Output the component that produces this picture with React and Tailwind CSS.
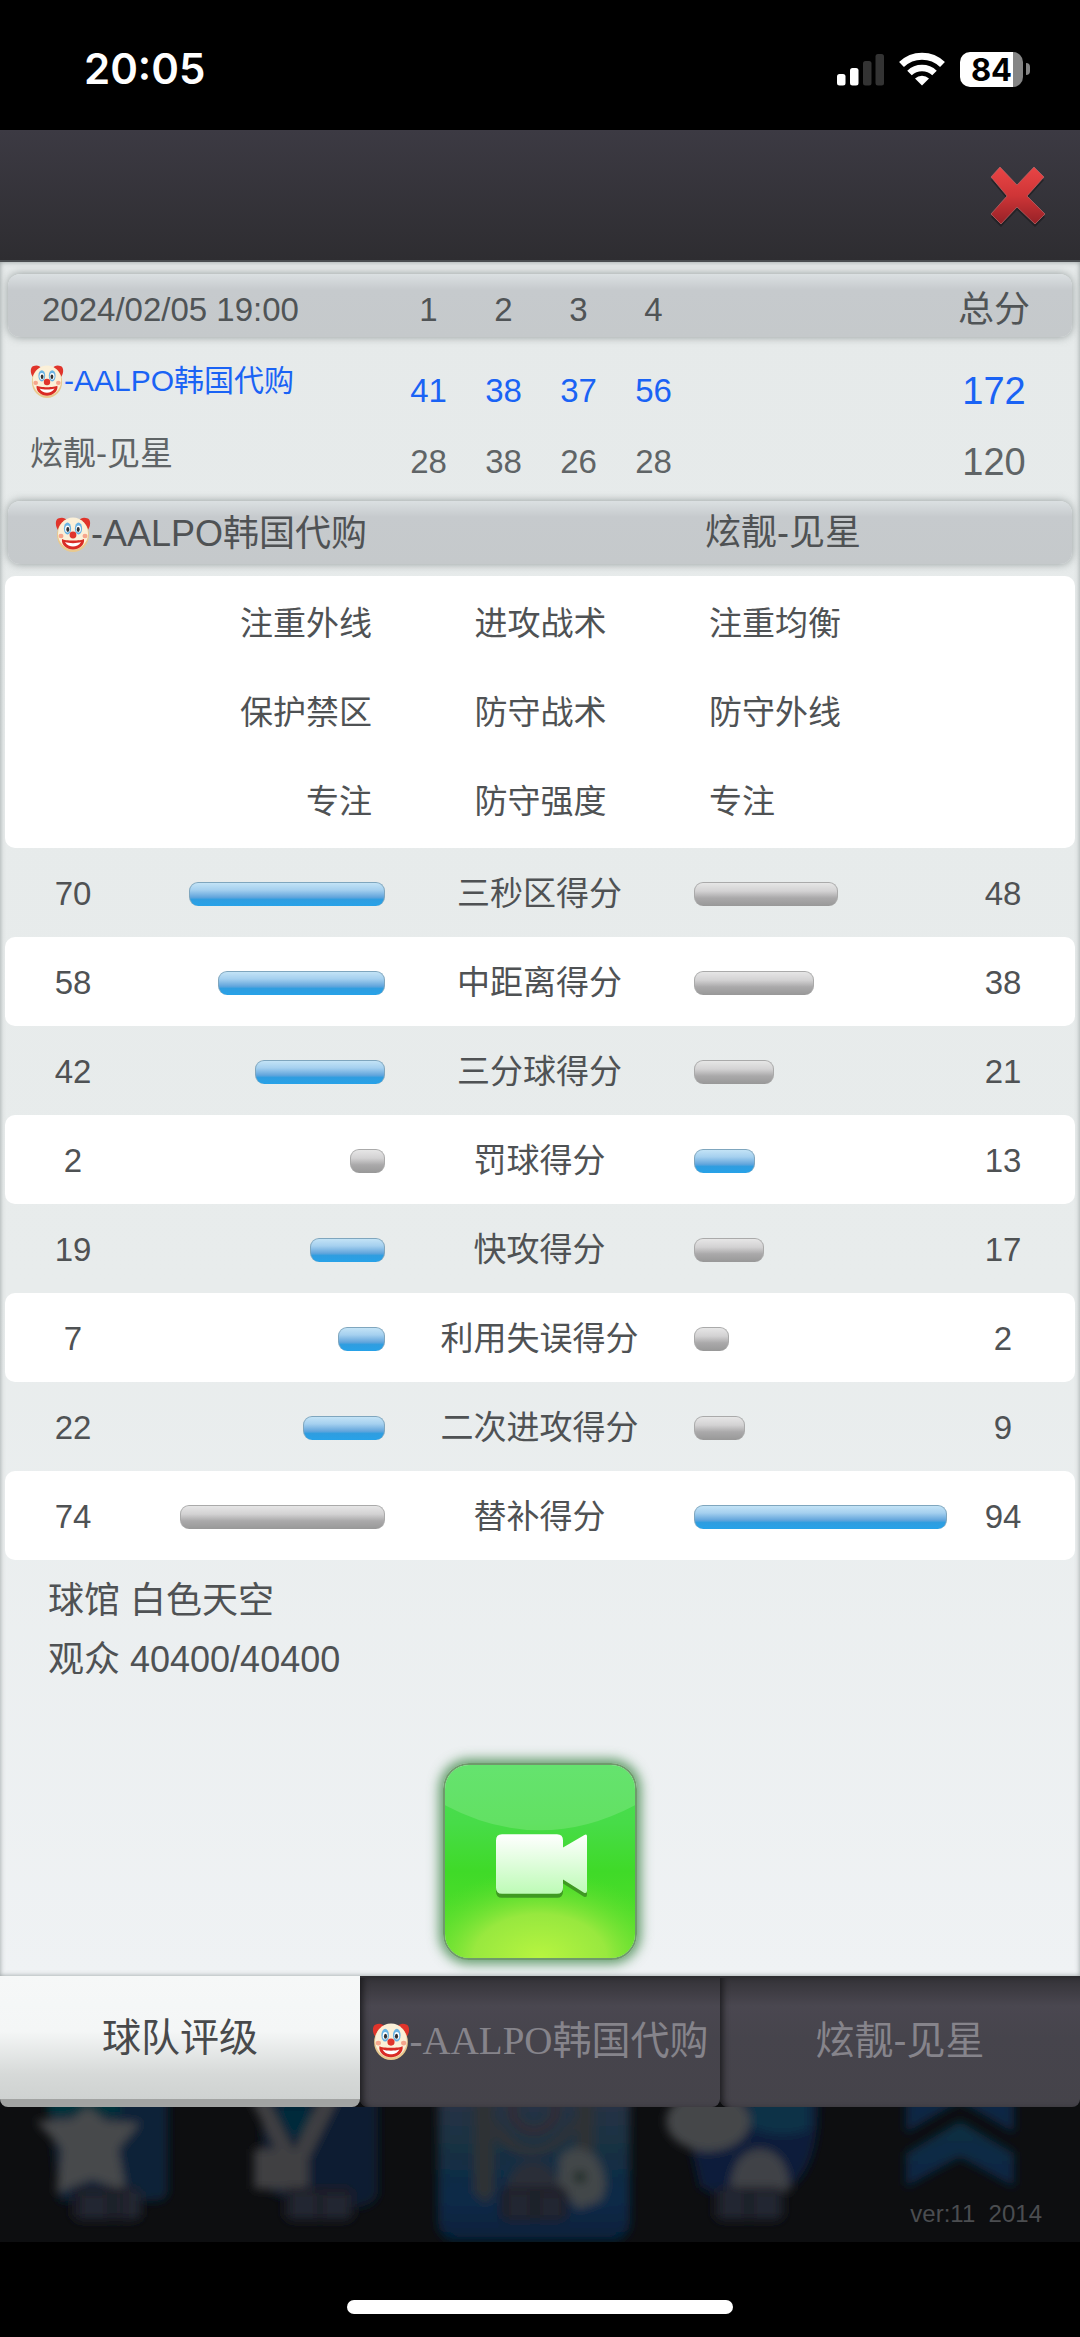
import React from "react";

const QUARTERS = ["1", "2", "3", "4"];

const TACTICS = [
  ["注重外线", "进攻战术", "注重均衡"],
  ["保护禁区", "防守战术", "防守外线"],
  ["专注", "防守强度", "专注"],
];

const STATS = [
  ["三秒区得分", 70, 48],
  ["中距离得分", 58, 38],
  ["三分球得分", 42, 21],
  ["罚球得分", 2, 13],
  ["快攻得分", 19, 17],
  ["利用失误得分", 7, 2],
  ["二次进攻得分", 22, 9],
  ["替补得分", 74, 94],
];

const barWidth = (value) => `${((30 + value * 2.37) / 260) * 100}%`;

function Clown({ className }) {
  return (
    <svg viewBox="0 0 36 36" className={className} role="img" aria-label="小丑">
      <path d="M4 15C0 11 0 4 3 2.500c4-1.500 7-1 9 2zM32 15c4-4 4-11 1-12.500-4-1.500-7-1-9 2z" fill="#e0342b" />
      <ellipse cx="18" cy="19" rx="16" ry="17" fill="#e9c98f" />
      <ellipse cx="18" cy="17.500" rx="15" ry="16" fill="#fbf0d8" />
      <ellipse cx="12.500" cy="12.500" rx="3.600" ry="6" fill="#6ab4e4" />
      <ellipse cx="23.500" cy="12.500" rx="3.600" ry="6" fill="#6ab4e4" />
      <ellipse cx="12.500" cy="13" rx="2.400" ry="3.600" fill="#fff" />
      <ellipse cx="23.500" cy="13" rx="2.400" ry="3.600" fill="#fff" />
      <ellipse cx="12.800" cy="13.500" rx="1.500" ry="2.400" fill="#333" />
      <ellipse cx="23.200" cy="13.500" rx="1.500" ry="2.400" fill="#333" />
      <ellipse cx="6" cy="20" rx="2.500" ry="2.200" fill="#f6a58c" />
      <ellipse cx="30" cy="20" rx="2.500" ry="2.200" fill="#f6a58c" />
      <path d="M7 23c3 2 19 2 22 0 1 6-5 10.500-11 10.500S6 29 7 23z" fill="#d92b25" />
      <path d="M10 26c4 1.500 12 1.500 16 0-2 3.500-5 4.500-8 4.500s-6-1-8-4.500z" fill="#fff" />
      <circle cx="18" cy="19" r="3.400" fill="#e0342b" />
    </svg>
  );
}

function TeamName({ size = "h-9 w-9" }) {
  return (
    <span className="inline-flex items-center align-middle whitespace-nowrap">
      <Clown className={`${size} shrink-0`} />
      <span>-AALPO韩国代购</span>
    </span>
  );
}

function StatusBar() {
  return (
    <div className="flex h-[130px] items-center justify-between bg-black pt-2 pr-[50px] pl-[84px] text-white">
      <span className="font-['Inter'] text-[42px] leading-none font-semibold">20:05</span>
      <div className="flex items-center gap-[15px]">
        <svg viewBox="0 0 47 35" className="h-[35px] w-[47px]" aria-hidden="true">
          <rect x="0" y="22" width="8.500" height="11.500" rx="2.500" fill="#fff" />
          <rect x="13" y="16" width="8.500" height="17.500" rx="2.500" fill="#fff" />
          <rect x="26" y="9" width="8.500" height="24.500" rx="2.500" fill="#333" />
          <rect x="38.500" y="2" width="8.500" height="31.500" rx="2.500" fill="#333" />
        </svg>
        <svg viewBox="0 0 46 35" className="h-[35px] w-[46px]" aria-hidden="true" fill="none" stroke="#fff">
          <path d="M2.500 12.500a29.500 29.500 0 0 1 41 0" strokeWidth="7" />
          <path d="M10.500 21a18 18 0 0 1 25 0" strokeWidth="6.500" />
          <path d="M23 33.500l-7-7a10.500 10.500 0 0 1 14 0z" fill="#fff" stroke="none" />
        </svg>
        <div className="flex items-center gap-[3px]">
          <div className="flex h-[35px] w-[63px] items-center justify-center rounded-[10px] bg-[linear-gradient(90deg,#fff_84%,#858585_84%)] font-['Inter'] text-[31px] leading-none font-bold text-black">
            84
          </div>
          <span className="h-3 w-1 rounded-r-full bg-[#858585]" />
        </div>
      </div>
    </div>
  );
}

function Header() {
  return (
    <header className="flex h-[132px] items-center justify-end border-b-2 border-[#4a4d50] bg-linear-to-b from-[#3c3a43] to-[#2e2d31] pr-[34px]">
      <button type="button" aria-label="关闭" className="mt-1">
        <svg viewBox="0 0 56 62" className="h-[62px] w-14">
          <defs>
            <linearGradient id="closeFill" x1="0" y1="0" x2="0" y2="1">
              <stop offset="0" stopColor="#e94545" />
              <stop offset="0.500" stopColor="#cf3537" />
              <stop offset="1" stopColor="#962127" />
            </linearGradient>
          </defs>
          <path d="M1 14L10 4 27 22 44 4 54 14 37 33 55 51 45 61 27 44 11 61 1 51 17 33z" fill="#1d1c20" opacity="0.700" />
          <path d="M1 11L10 1 27 19 44 1 54 11 37 30 55 48 45 58 27 41 11 58 1 48 17 30z" fill="url(#closeFill)" stroke="#b96a6c" strokeOpacity="0.700" />
        </svg>
      </button>
    </header>
  );
}

const BAR =
  "rounded-[12px] bg-[linear-gradient(#dbe0e2,#c6cacd_16px,#c5c9cb)] shadow-[0_0_8px_rgba(90,100,100,0.6)]";
const SCORE_GRID = "grid grid-cols-[383fr_75fr_75fr_75fr_75fr_225fr_156fr] items-center";

function ScoreTable() {
  return (
    <table className="mx-2 mt-3 block text-[33px] text-[#505456]">
      <thead className="block">
        <tr className={`${SCORE_GRID} ${BAR} h-[63px] pt-2`}>
          <th scope="col" className="pl-[34px] text-left font-normal">2024/02/05 19:00</th>
          {QUARTERS.map((q) => (
            <th key={q} scope="col" className="text-center font-normal">{q}</th>
          ))}
          <th scope="col" className="col-start-7 text-center text-[36px] leading-[40px] font-normal">总分</th>
        </tr>
      </thead>
      <tbody className="block pt-[18px]">
        <tr className={`${SCORE_GRID} h-[71px] text-[#1a63f5]`}>
          <th scope="row" className="pb-5 pl-[22px] text-left text-[30px] font-normal">
            <TeamName size="h-[34px] w-[34px]" />
          </th>
          {[41, 38, 37, 56].map((n, i) => (
            <td key={i} className="text-center">{n}</td>
          ))}
          <td className="col-start-7 text-center text-[38px]">172</td>
        </tr>
        <tr className={`${SCORE_GRID} h-[71px] text-[#5f6466]`}>
          <th scope="row" className="pb-4 pl-[22px] text-left font-normal">炫靓-见星</th>
          {[28, 38, 26, 28].map((n, i) => (
            <td key={i} className="text-center">{n}</td>
          ))}
          <td className="col-start-7 text-center text-[38px]">120</td>
        </tr>
      </tbody>
    </table>
  );
}

function Bar({ value, strong }) {
  return (
    <div
      className={`h-6 rounded-[9px] border border-b-0 ${
        strong
          ? "border-[#7fa6be] bg-[linear-gradient(#c3e3f6,#a5d0ef_30%,#62a5dc_62%,#2f9de0_72%,#27a2e8)]"
          : "border-[#aaa] bg-[linear-gradient(#e6e6e6,#d3d2d3_35%,#aaa9aa_65%,#989898)]"
      }`}
      style={{ width: barWidth(value) }}
    />
  );
}

function StatRow({ label, home, away, striped }) {
  return (
    <div
      className={`mx-[5px] grid h-[89px] grid-cols-[104fr_260fr_309fr_260fr_98fr] items-center rounded-[10px] pt-[2px] pr-[23px] pl-4 text-center ${
        striped ? "bg-white" : ""
      }`}
    >
      <span>{home}</span>
      <div className="flex justify-end">
        <Bar value={home} strong={home > away} />
      </div>
      <span className="whitespace-nowrap">{label}</span>
      <div className="flex">
        <Bar value={away} strong={away > home} />
      </div>
      <span>{away}</span>
    </div>
  );
}

function VideoButton() {
  return (
    <button
      type="button"
      aria-label="观看录像"
      className="h-[197px] w-[194px] overflow-hidden rounded-[26px] border-2 border-[#6f9a6c] shadow-[0_0_12px_4px_rgba(40,120,50,0.7)]"
    >
      <svg viewBox="0 0 190 192" className="h-full w-full" preserveAspectRatio="none">
        <defs>
          <linearGradient id="green" x1="0" y1="0" x2="0" y2="1">
            <stop offset="0" stopColor="#4ade56" />
            <stop offset="0.300" stopColor="#47dc48" />
            <stop offset="0.550" stopColor="#3fda28" />
            <stop offset="1" stopColor="#5de02c" />
          </linearGradient>
          <radialGradient id="glow" cx="0.500" cy="1" r="0.700" gradientTransform="translate(0 0.350) scale(1 0.650)">
            <stop offset="0" stopColor="#b8f540" />
            <stop offset="0.500" stopColor="#a4ea42" stopOpacity="0.850" />
            <stop offset="1" stopColor="#5cdf2c" stopOpacity="0" />
          </radialGradient>
          <linearGradient id="cam" x1="0" y1="0" x2="0" y2="1">
            <stop offset="0" stopColor="#fff" />
            <stop offset="1" stopColor="#bdfbb6" />
          </linearGradient>
        </defs>
        <rect width="190" height="192" fill="url(#green)" />
        <rect width="190" height="192" fill="url(#glow)" />
        <path d="M0 0h190v40Q95 90 0 40z" fill="#fff" opacity="0.150" />
        <path d="M57 73h55q6 0 6 6v8l21-13q3-1 3 2v53q0 3-3 2l-21-13v8q0 6-6 6H57q-6 0-6-6V79q0-6 6-6z" fill="#3f9a22" />
        <path d="M57 69h55q6 0 6 6v7l21-12q3-2 3 1v54q0 3-3 2l-21-13v8q0 6-6 6H57q-6 0-6-6V75q0-6 6-6z" fill="url(#cam)" />
      </svg>
    </button>
  );
}

const DARK_TAB =
  "flex items-center justify-center rounded-b-lg border-t-2 border-[#2d2c30] bg-[linear-gradient(#343338,#4a4750_28px,#46444c_60px,#45434a)] pb-1 text-[#86848b] shadow-[inset_6px_0_6px_-3px_rgba(20,20,22,0.8)]";

function Tabs() {
  return (
    <nav className="grid h-[131px] grid-cols-3 bg-[#0d0e10] text-[39px] leading-none" aria-label="比赛数据">
      <button
        type="button"
        aria-current="page"
        className="rounded-b-lg border-b-8 border-[#a2a4a3] bg-[linear-gradient(#f6f8f8,#f4f6f6_45%,#d6d9d8_80%,#cfd2d1)] text-[#48494b]"
      >
        球队评级
      </button>
      <button type="button" className={`${DARK_TAB} font-['Liberation_Serif','Noto_Sans_CJK_SC',serif]`}>
        <TeamName size="h-[38px] w-[38px]" />
      </button>
      <button type="button" className={DARK_TAB}>炫靓-见星</button>
    </nav>
  );
}

/* Dimmed, out-of-focus main menu behind the dialog. */
function MenuArt() {
  return (
    <svg viewBox="0 0 1080 135" className="block w-full" aria-hidden="true">
      <defs>
        <filter id="soft" x="-10%" y="-10%" width="120%" height="120%">
          <feGaussianBlur stdDeviation="5" />
        </filter>
        <linearGradient id="sel" x1="0" y1="0" x2="0" y2="1">
          <stop offset="0" stopColor="#2d3544" />
          <stop offset="0.450" stopColor="#152f43" />
          <stop offset="0.750" stopColor="#092947" />
          <stop offset="1" stopColor="#06203a" />
        </linearGradient>
        <linearGradient id="chev" x1="0" y1="0" x2="0" y2="1">
          <stop offset="0" stopColor="#073043" />
          <stop offset="1" stopColor="#082444" />
        </linearGradient>
      </defs>
      <rect width="1080" height="135" fill="#0d0e10" />
      <g filter="url(#soft)">
        <path d="M48-10H168V82Q168 94 155 94H60z" fill="#0a2139" />
        <path d="M48-10H120V8H48z" fill="#06323b" />
        <path d="M88 0l18 14 34 2-22 26 8 42-34-12-36 14 6-44L36 14l36-2z" fill="#47484b" />
        <path d="M262-10H378V84Q378 96 360 100H300L262 80z" fill="#0b1f33" />
        <path d="M275 0h36v30h-20z" fill="#062c3b" />
        <path d="M250-8h18l26 52 26-52h18l-30 60v30h-54V42h22z" fill="#414142" />
        <rect x="438" y="-20" width="192" height="154" rx="18" fill="url(#sel)" />
        <path d="M474-5h20v90l-8 12-12-12zM576-5h18v50h-18z" fill="#2d3035" />
        <path d="M496 10q36 60 78 0v14q-38 44-78 8z" fill="#303034" />
        <circle cx="534" cy="2" r="22" fill="none" stroke="#302f35" strokeWidth="10" />
        <path d="M512 66q20-24 42 0l10 20h-62z" fill="#2a2f38" />
        <path d="M560 50q16-18 36 0 16 26 4 44l-22 8-20-26z" fill="#42474a" />
        <circle cx="580" cy="70" r="6" fill="#172922" />
        <path d="M680-10H818Q820 60 790 80L750 102 700 80z" fill="#091f3b" />
        <path d="M750-10h60v32q-30 12-60-2z" fill="#073047" />
        <ellipse cx="708" cy="14" rx="42" ry="30" fill="#45464a" />
        <path d="M730 84q2-40 30-42 28 2 30 42z" fill="#414346" />
        <path d="M906-24L960-50 1014-24V26L960-6 906 26z" fill="url(#chev)" />
        <path d="M906 46L960 14 1014 46V80L960 50 906 80z" fill="url(#chev)" />
        <g fill="#1a1d28">
          <rect x="72" y="80" width="70" height="34" rx="8" />
          <rect x="284" y="80" width="70" height="34" rx="8" />
          <rect x="500" y="80" width="68" height="34" rx="8" />
          <rect x="714" y="80" width="70" height="34" rx="8" />
        </g>
        <g fill="#2b2e3a" opacity="0.500">
          <path d="M82 88h24v22H82zM114 88h6v20h-6zM126 84h14v26h-14zM292 86h24v24h-24zM324 88h24v22h-24zM508 86h22v24h-22zM540 88h22v22h-22zM722 84h22v26h-22zM754 86h24v24h-24z" />
        </g>
      </g>
    </svg>
  );
}

export default function App() {
  return (
    <div className="min-h-screen bg-black font-['Liberation_Sans','Noto_Sans_CJK_SC',sans-serif]">
      <StatusBar />
      <Header />
      <main className="flow-root bg-[linear-gradient(#e6eaea,#e8ecec_60%,#eff2f4)] text-[33px] leading-none text-[#4f5254] shadow-[inset_0_0_5px_rgba(110,120,120,0.7)]">
        <ScoreTable />
        <div className={`${BAR} mx-2 mt-1 grid h-[63px] grid-cols-[697fr_367fr] items-center text-[36px]`}>
          <div className="pl-[47px]">
            <TeamName />
          </div>
          <div>炫靓-见星</div>
        </div>
        <section className="mx-[5px] mt-3 rounded-[10px] bg-white pt-[3px] pb-[2px]">
          {TACTICS.map(([home, label, away]) => (
            <div key={label} className="grid h-[89px] grid-cols-[367fr_337fr_366fr] items-center">
              <span className="text-right">{home}</span>
              <span className="text-center">{label}</span>
              <span>{away}</span>
            </div>
          ))}
        </section>
        <section>
          {STATS.map(([label, home, away], i) => (
            <StatRow key={label} label={label} home={home} away={away} striped={i % 2 === 1} />
          ))}
        </section>
        <div className="px-12 pt-[11px] text-[36px] leading-[59px]">
          <p>球馆 白色天空</p>
          <p>观众 40400/40400</p>
        </div>
        <div className="flex justify-center pt-[74px] pb-4">
          <VideoButton />
        </div>
      </main>
      <Tabs />
      <footer>
        <div className="relative">
          <MenuArt />
          <p className="absolute right-[38px] bottom-[14px] text-[24px] leading-7 whitespace-pre text-[#4b4d50]">ver:11  2014</p>
        </div>
        <div className="mx-auto mt-[58px] h-[14px] w-[386px] rounded-full bg-white" />
      </footer>
    </div>
  );
}
